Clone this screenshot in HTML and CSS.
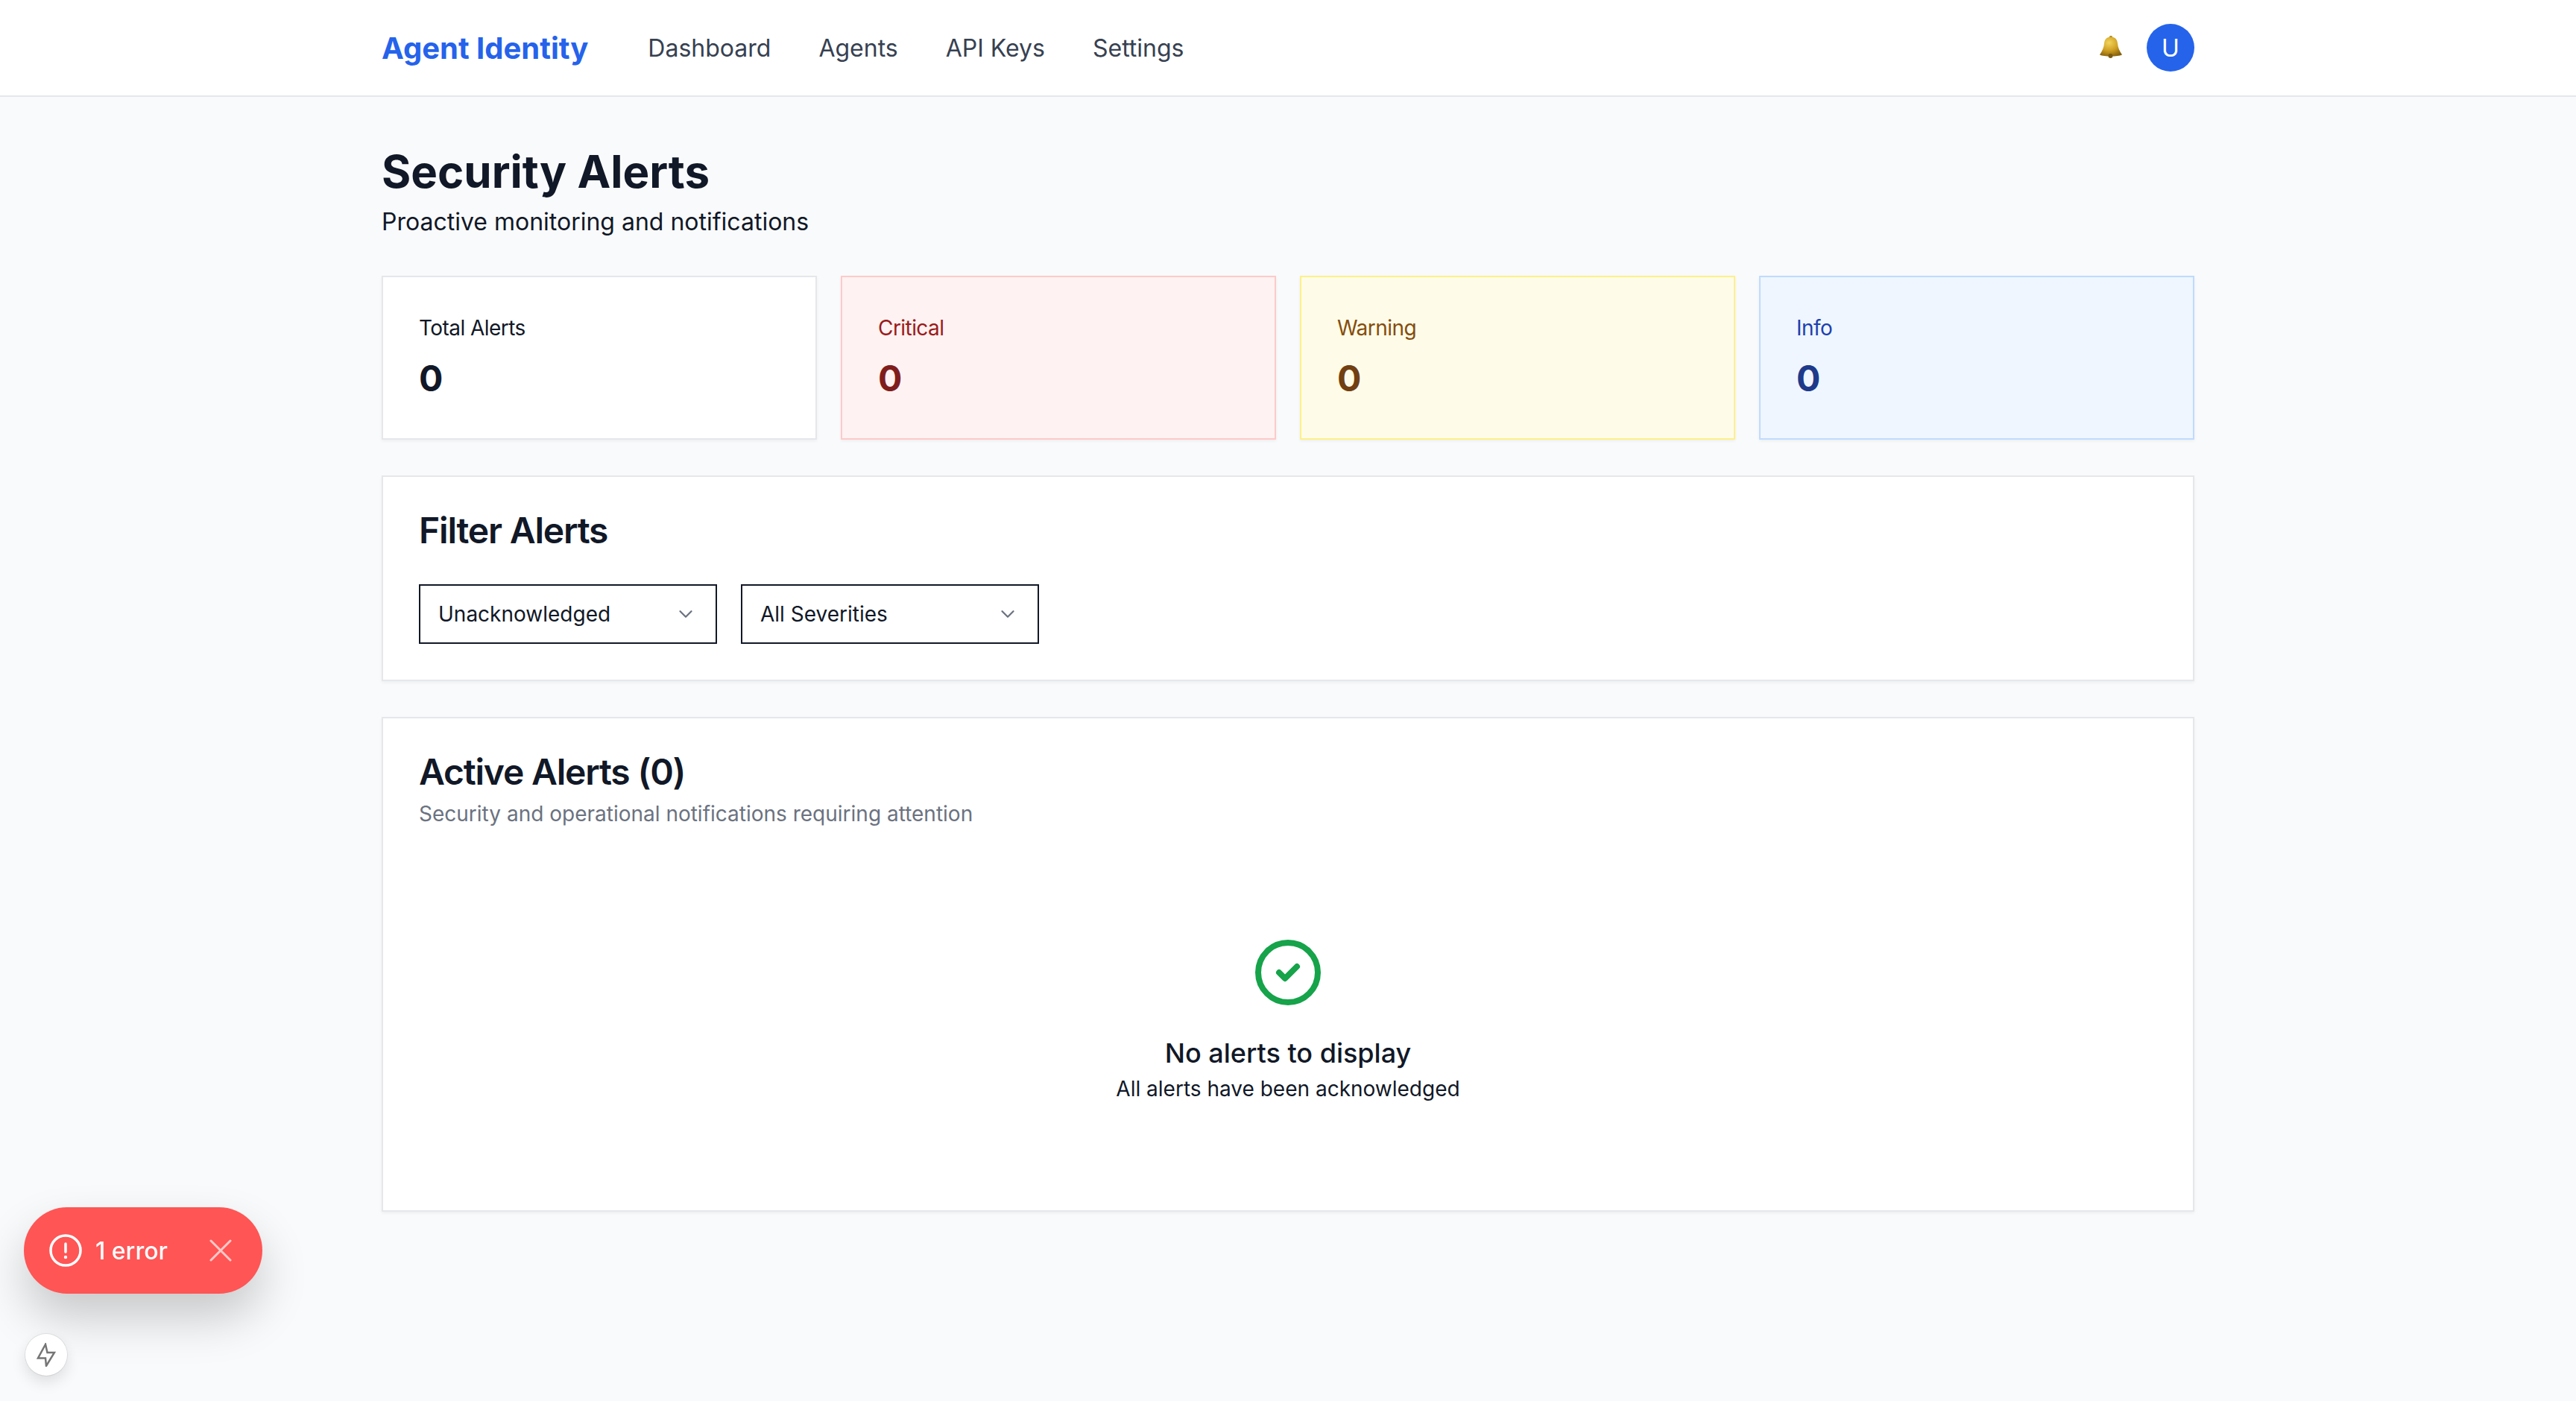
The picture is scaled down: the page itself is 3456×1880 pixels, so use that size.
FILE: index.html
```html
<!DOCTYPE html>
<html lang="en">
<head>
    <meta charset="UTF-8">
    <meta name="viewport" content="width=device-width, initial-scale=1.0">
    <title>Security Alerts</title>
    <link rel="stylesheet" href="styles.css">
</head>
<body>
    <nav class="topbar">
        <div class="container topbar-inner">
            <div class="topbar-left">
                <a class="brand">Agent Identity</a>
                <a class="nav-link">Dashboard</a>
                <a class="nav-link">Agents</a>
                <a class="nav-link">API Keys</a>
                <a class="nav-link">Settings</a>
            </div>
            <div class="topbar-right">
                <svg class="bell" viewBox="0 0 32 32">
                    <defs>
                        <radialGradient id="bellGold" cx="0.42" cy="0.3" r="0.75">
                            <stop offset="0" stop-color="#f2d45c"/>
                            <stop offset="0.55" stop-color="#cf9f22"/>
                            <stop offset="1" stop-color="#86600c"/>
                        </radialGradient>
                    </defs>
                    <circle cx="16" cy="2.2" r="2.2" fill="#a67c14"/>
                    <path d="M16 1.500c-6 0-8.500 3.500-9 9-.4 5-2.500 10-6 15 3 1.500 9 2 15 2s12-.5 15-2c-3.500-5-5.600-10-6-15-.5-5.500-3-9-9-9z" fill="url(#bellGold)"/>
                    <circle cx="15.500" cy="27" r="3" fill="#7a5a12"/>
                </svg>
                <div class="avatar">U</div>
            </div>
        </div>
    </nav>

    <main class="container page">
        <h1>Security Alerts</h1>
        <p class="subtitle">Proactive monitoring and notifications</p>

        <div class="stats">
            <div class="stat">
                <div class="stat-label">Total Alerts</div>
                <div class="stat-value">0</div>
            </div>
            <div class="stat critical">
                <div class="stat-label">Critical</div>
                <div class="stat-value">0</div>
            </div>
            <div class="stat warning">
                <div class="stat-label">Warning</div>
                <div class="stat-value">0</div>
            </div>
            <div class="stat info">
                <div class="stat-label">Info</div>
                <div class="stat-value">0</div>
            </div>
        </div>

        <section class="card filter-card">
            <h2>Filter Alerts</h2>
            <div class="filters">
                <div class="select">
                    <span>Unacknowledged</span>
                    <svg viewBox="0 0 20 20"><path d="M5 7.500l5 5 5-5" fill="none" stroke="#6b7280" stroke-width="1.500" stroke-linecap="round" stroke-linejoin="round"/></svg>
                </div>
                <div class="select">
                    <span>All Severities</span>
                    <svg viewBox="0 0 20 20"><path d="M5 7.500l5 5 5-5" fill="none" stroke="#6b7280" stroke-width="1.500" stroke-linecap="round" stroke-linejoin="round"/></svg>
                </div>
            </div>
        </section>

        <section class="card alerts-card">
            <h2>Active Alerts (0)</h2>
            <p class="card-desc">Security and operational notifications requiring attention</p>
            <div class="empty">
                <svg class="empty-icon" viewBox="0 0 24 24" fill="none" stroke="#16a34a" stroke-width="2" stroke-linecap="round" stroke-linejoin="round">
                    <path d="M9 12l2 2 4-4"/>
                    <circle cx="12" cy="12" r="10"/>
                </svg>
                <div class="empty-title">No alerts to display</div>
                <div class="empty-text">All alerts have been acknowledged</div>
            </div>
        </section>
    </main>

    <div class="error-toast">
        <svg class="toast-icon" viewBox="0 0 44 44" fill="none" stroke="#fff" stroke-width="3.500" stroke-linecap="round">
            <circle cx="22" cy="22" r="20"/>
            <path d="M22 13v11"/>
            <circle cx="22" cy="31" r="1.200" fill="#fff" stroke-width="2"/>
        </svg>
        <span class="toast-text">1 error</span>
        <svg class="toast-close" viewBox="0 0 30 30" fill="none" stroke="#ffc9c9" stroke-width="3" stroke-linecap="round">
            <path d="M2 2l26 26M28 2L2 28"/>
        </svg>
    </div>

    <div class="dev-badge">
        <svg viewBox="0 0 26 32" fill="none" stroke="#757575" stroke-width="2.500">
            <path d="M12 2L2 20.500h10L13 31l11-18h-9.500z"/>
        </svg>
    </div>
</body>
</html>
```

FILE: styles.css
```css
* {
    box-sizing: border-box;
}
html, body {
    margin: 0;
    padding: 0;
}
body {
    min-height: 1880px;
    font-family: Inter, "Noto Sans", sans-serif;
    background-color: #f9fafb;
    color: #111827;
}
h1, h2, p {
    margin: 0;
}
.container {
    width: 2432px;
    margin: 0 auto;
}

/* top bar */
.topbar {
    height: 130px;
    background-color: #fff;
    border-bottom: 2px solid #e5e7eb;
}
.topbar-inner {
    height: 128px;
    display: flex;
    align-items: center;
    justify-content: space-between;
}
.topbar-left {
    display: flex;
    align-items: center;
    gap: 64px;
}
.brand {
    font-size: 40px;
    font-weight: 700;
    color: #2563eb;
    margin-right: 16px;
}
.nav-link {
    font-size: 32px;
    color: #374151;
}
.topbar-right {
    display: flex;
    align-items: center;
    gap: 32px;
}
.bell {
    width: 32px;
    height: 32px;
}
.avatar {
    width: 64px;
    height: 64px;
    border-radius: 50%;
    background-color: #2563eb;
    color: #fff;
    font-size: 32px;
    display: flex;
    align-items: center;
    justify-content: center;
}

/* page */
.page {
    padding-top: 64px;
}
h1 {
    font-size: 60px;
    line-height: 72px;
    font-weight: 700;
}
.subtitle {
    font-size: 32px;
    line-height: 48px;
    margin-top: 8px;
}

.stats {
    display: grid;
    grid-template-columns: repeat(4, 1fr);
    gap: 32px;
    margin-top: 48px;
}
.stat {
    height: 220px;
    padding: 48px;
    background-color: #fff;
    border: 2px solid #e5e7eb;
    box-shadow: 0 2px 4px rgba(0, 0, 0, 0.05);
}
.stat-label {
    font-size: 28px;
    line-height: 40px;
    letter-spacing: -0.02em;
}
.stat-value {
    font-size: 48px;
    line-height: 64px;
    font-weight: 700;
    margin-top: 16px;
}
.critical {
    background-color: #fef2f2;
    border-color: #fecaca;
}
.critical .stat-label {
    color: #991b1b;
}
.critical .stat-value {
    color: #7f1d1d;
}
.warning {
    background-color: #fefce8;
    border-color: #fef08a;
}
.warning .stat-label {
    color: #854d0e;
}
.warning .stat-value {
    color: #713f12;
}
.info {
    background-color: #eff6ff;
    border-color: #bfdbfe;
}
.info .stat-label {
    color: #1e40af;
}
.info .stat-value {
    color: #1e3a8a;
}

.card {
    background-color: #fff;
    border: 2px solid #e5e7eb;
    box-shadow: 0 2px 4px rgba(0, 0, 0, 0.05);
    padding: 48px;
    margin-top: 48px;
}
.card h2 {
    font-size: 48px;
    line-height: 48px;
    font-weight: 600;
    letter-spacing: -0.025em;
}
.filter-card {
    height: 276px;
}
.filters {
    display: flex;
    gap: 32px;
    margin-top: 48px;
}
.select {
    width: 400px;
    height: 80px;
    padding: 0 25px 0 24px;
    border: 2px solid #111827;
    font-size: 28px;
    display: flex;
    align-items: center;
    justify-content: space-between;
}
.select svg {
    width: 30px;
    height: 30px;
}

.alerts-card {
    height: 664px;
}
.card-desc {
    font-size: 28px;
    line-height: 40px;
    color: #6b7280;
    margin-top: 12px;
}
.empty {
    display: flex;
    flex-direction: column;
    align-items: center;
    margin-top: 145px;
}
.empty-icon {
    width: 96px;
    height: 96px;
}
.empty-title {
    font-size: 36px;
    line-height: 56px;
    font-weight: 500;
    margin-top: 32px;
}
.empty-text {
    font-size: 28px;
    line-height: 40px;
}

/* dev overlay */
.error-toast {
    position: fixed;
    left: 32px;
    top: 1620px;
    width: 320px;
    height: 116px;
    padding: 0 41px 0 34px;
    border-radius: 58px;
    background-color: #ff5555;
    color: #fff;
    display: flex;
    align-items: center;
    box-shadow: 0 32px 64px rgba(0, 0, 0, 0.2);
}
.toast-icon {
    width: 44px;
    height: 44px;
}
.toast-text {
    font-size: 32px;
    font-weight: 500;
    margin-left: 18px;
}
.toast-close {
    width: 30px;
    height: 30px;
    margin-left: auto;
}
.dev-badge {
    position: fixed;
    left: 34px;
    top: 1790px;
    width: 56px;
    height: 56px;
    border-radius: 50%;
    background-color: #fff;
    display: flex;
    align-items: center;
    justify-content: center;
    box-shadow: 0 0 0 1px rgba(0, 0, 0, 0.08), 0 8px 20px rgba(0, 0, 0, 0.12);
}
.dev-badge svg {
    width: 26px;
    height: 32px;
}
```
